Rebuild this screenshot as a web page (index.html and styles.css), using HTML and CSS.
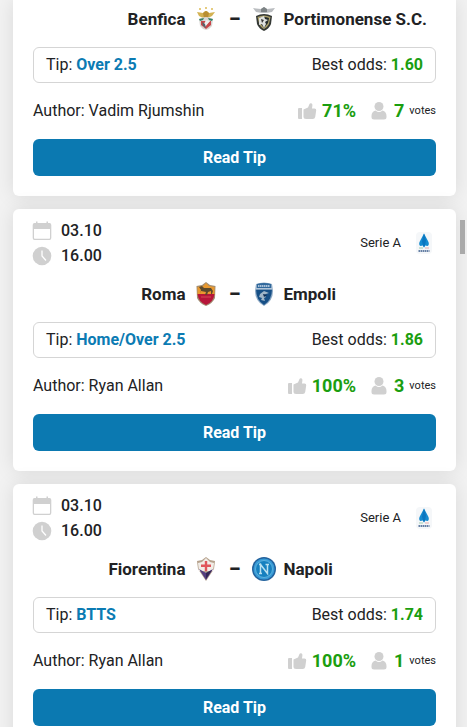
FILE: index.html
```html
<!DOCTYPE html>
<html lang="en">
<head>
<meta charset="utf-8">
<meta name="viewport" content="width=device-width, initial-scale=1">
<title>Football tips</title>
<link rel="stylesheet" href="styles.css">
</head>
<body>
<svg class="defs" aria-hidden="true">
  <symbol id="calendar" viewBox="0 0 20 20"><path fill="#d0d0d0" fill-rule="evenodd" d="M4 .5h1.500V2h9V.5H16V2h1.500Q19.300 2 19.300 4v13q0 2-1.800 2h-15Q.7 19 .7 17V4Q.7 2 2.500 2H4zM2 8v9q0 .7.700.7h14.600q.7 0 .7-.7V8z"/></symbol>
  <symbol id="clock" viewBox="0 0 20 20"><circle cx="10" cy="10" r="9.300" fill="#d0d0d0"/><path d="M10 4.500V10l4 4.500" fill="none" stroke="#fff" stroke-width="1.300"/></symbol>
  <symbol id="thumb" viewBox="0 0 20 20"><path fill="#d0d0d0" d="M2 7h3v11H2q-1 0-1-1V8q0-1 1-1zM6.500 8.500 11 6.500 12.500 3q.5-1 1.700-.7 1.500.5 1.200 2.200L15 7.500h2.500Q19.500 7.700 19.200 9.500l-1 6.500q-.4 2-2.400 2H9q-2.500 0-2.500-2z"/></symbol>
  <symbol id="person" viewBox="0 0 20 20"><circle cx="10" cy="5.500" r="4.500" fill="#d0d0d0"/><path fill="#d0d0d0" d="M6.500 9.500Q10 12.500 13.500 9.500 17.500 10.500 17.500 15v1q0 2.500-2.500 2.500H5Q2.500 18.500 2.500 16v-1Q2.500 10.500 6.500 9.500z"/></symbol>
  <symbol id="serie-a" viewBox="0 0 24 24"><rect x="4" y="1" width="16" height="22" rx="4" fill="#f5f7f9"/><path fill="#168bd0" d="M12 2.500 16.500 11q1 3-1 4L13 14.500l-1 2-1-2L8.500 15q-2-1-1-4z"/><path fill="#0b76c0" d="m12 2.500 2 7-1 5-1 2-1-2-1-4z"/><path stroke="#9fcdb2" d="M7 17h4"/><path stroke="#e8adad" d="M13 17h4"/><path stroke="#6680a5" stroke-width="2" stroke-dasharray="1.500 .5" d="M6.500 20h11"/></symbol>
  <symbol id="benfica" viewBox="0 0 24 24"><path fill="#e5cc80" d="M5 1h2v2H5zM11 0h2v2h-2zM17 1h2v2h-2z"/><path fill="#d3b253" d="M3 5l6 1 2-2h2l2 2 6-1-3 4-4 2H9L5 9z"/><path fill="#b88e32" d="m9 6 3-2 3 2-1 5h-4z"/><path fill="#d9d7d4" d="M5 12q7-4 14 0l-1 7q-2 3-6 4-4-1-6-4z"/><path fill="#348067" d="m5 12 5-1-1 2-3 1zM19 12l-5-1 1 2 3 1z"/><path fill="#c84649" d="M7 14h5v4l4-4h1v4l-5 4-5-4z"/><path fill="#eee" d="m12 13 4 1-5 6-2-1z"/><path fill="#53636a" d="m8 15 3 2 1 4-3-2z"/></symbol>
  <symbol id="portimonense" viewBox="0 0 24 24"><path fill="#b9bcbf" d="m1 1 8 1 3-2 3 2 8-1-3 4-6 1h-4L4 5z"/><path fill="#7c8284" d="m9 2 3-2 3 2v3H9z"/><path fill="#343835" d="M4 9q8-4 16 0l-1 8q-2 5-7 7-5-2-7-7z"/><path fill="#aba06b" d="M5.500 10Q12 7 18.500 10L17 17q-2 4-5 5-4-2-5-6z"/><path fill="#242b2b" d="M7 11q5-2 10 0l-1 5-4 5-4-5z"/><path fill="#dfe1de" d="m7 11 5-2 1 3 3 1-3 2 1 2-2 4-2-4-3 1z"/><path fill="#333" d="m9 12 3 1-2 3z"/></symbol>
  <symbol id="roma" viewBox="0 0 24 24"><path fill="#a18d72" d="m2.500 4 5.500-1 4-3 4 3 5.500 1-.5 12q-2 5-9 8-7-3-9-8z"/><path fill="#e9992f" d="m3.500 5 5.500-1 3-3 3 3 5.500 1v8h-17z"/><path fill="#b7163a" d="M3.500 12h17q-1 8-8.500 11-7.500-3-8.500-11z"/><path fill="#5b4a2d" d="m5 5 3-1 2 2h7l2 3-1 3h-1V9l-3 1-1 3h-2l1-3-5-1-1 3H6l1-4z"/><path stroke="#d54a55" d="M7 15h10"/></symbol>
  <symbol id="empoli" viewBox="0 0 24 24"><path fill="#8ca8c4" d="M4 2q8-3 16 0l1 7q0 10-9 15Q3 19 3 9z"/><path fill="#164f86" d="M4 7h16q0 11-8 16-8-5-8-16z"/><path fill="#31699c" d="M5 2q7-2 14 0v4H5z"/><path stroke="#a9c1d8" stroke-width="2" stroke-dasharray="1.500 .5" d="M6 4h12"/><path stroke="#d8e3ec" d="M4 7h16"/><path fill="#9fb5c8" d="m8 12 4-3 5 2-3 1-2 1 2 2-2 1 1 3-4-1 1-2-3-1z"/><path fill="#102c52" d="m11 12 4 1-3 2z"/></symbol>
  <symbol id="fiorentina" viewBox="0 0 24 24"><path fill="#b5a18c" d="m12 0 4 3 5 1-1 8-8 12-8-12-1-8 5-1z"/><path fill="#f1ece6" d="m12 1 4 4 4 1-1 8H5L4 6l4-1z"/><path fill="#543d80" d="m5 12 7 4 7-4-7 11z"/><path fill="#332753" d="m12 16 6-3-6 9z"/><path fill="#e0555a" d="M10.800 4h2.400v3.500H17v2.600h-3.800V14h-2.400v-3.900H7V7.500h3.800z"/></symbol>
  <symbol id="napoli" viewBox="0 0 24 24"><circle cx="12" cy="12" r="12" fill="#24639e"/><circle cx="12" cy="12" r="10.500" fill="#379bd7"/><circle cx="12" cy="12" r="8.500" fill="#1680bf" stroke="#5fb2de"/><path fill="none" stroke="#b9e0f0" stroke-width="1.500" d="M7 16.500h3m-1.500 0v-9l7 9v-9M7 7.500h2.500m4 0H17"/></symbol>
</svg>
<main class="tips">
  <article class="card card-continued">
    <div class="teams">
      <div class="team home">Benfica <svg class="crest"><use href="#benfica"/></svg></div>
      <span class="dash">–</span>
      <div class="team"><svg class="crest"><use href="#portimonense"/></svg> Portimonense S.C.</div>
    </div>
    <div class="tip"><span>Tip: <b class="pick">Over 2.5</b></span><span>Best odds: <b class="odds">1.60</b></span></div>
    <div class="info">
      <span class="author">Author: Vadim Rjumshin</span>
      <svg class="icon"><use href="#thumb"/></svg><b class="score">71%</b>
      <svg class="icon person"><use href="#person"/></svg><b class="score">7</b><span class="votes">votes</span>
    </div>
    <button class="read" type="button">Read Tip</button>
  </article>

  <article class="card">
    <header class="meta">
      <div>
        <div class="when"><svg class="icon"><use href="#calendar"/></svg>03.10</div>
        <div class="when"><svg class="icon"><use href="#clock"/></svg>16.00</div>
      </div>
      <div class="league">Serie A <svg class="crest"><use href="#serie-a"/></svg></div>
    </header>
    <div class="teams">
      <div class="team home">Roma <svg class="crest"><use href="#roma"/></svg></div>
      <span class="dash">–</span>
      <div class="team"><svg class="crest"><use href="#empoli"/></svg> Empoli</div>
    </div>
    <div class="tip"><span>Tip: <b class="pick">Home/Over 2.5</b></span><span>Best odds: <b class="odds">1.86</b></span></div>
    <div class="info">
      <span class="author">Author: Ryan Allan</span>
      <svg class="icon"><use href="#thumb"/></svg><b class="score">100%</b>
      <svg class="icon person"><use href="#person"/></svg><b class="score">3</b><span class="votes">votes</span>
    </div>
    <button class="read" type="button">Read Tip</button>
  </article>

  <article class="card">
    <header class="meta">
      <div>
        <div class="when"><svg class="icon"><use href="#calendar"/></svg>03.10</div>
        <div class="when"><svg class="icon"><use href="#clock"/></svg>16.00</div>
      </div>
      <div class="league">Serie A <svg class="crest"><use href="#serie-a"/></svg></div>
    </header>
    <div class="teams">
      <div class="team home">Fiorentina <svg class="crest"><use href="#fiorentina"/></svg></div>
      <span class="dash">–</span>
      <div class="team"><svg class="crest"><use href="#napoli"/></svg> Napoli</div>
    </div>
    <div class="tip"><span>Tip: <b class="pick">BTTS</b></span><span>Best odds: <b class="odds">1.74</b></span></div>
    <div class="info">
      <span class="author">Author: Ryan Allan</span>
      <svg class="icon"><use href="#thumb"/></svg><b class="score">100%</b>
      <svg class="icon person"><use href="#person"/></svg><b class="score">1</b><span class="votes">votes</span>
    </div>
    <button class="read" type="button">Read Tip</button>
  </article>
</main>
<div class="scroll-thumb" aria-hidden="true"></div>
</body>
</html>
```

FILE: styles.css
```css
* {
  box-sizing: border-box;
}

html {
  scrollbar-width: none;
}

body {
  margin: 0;
  background: #f2f2f2;
  color: #212224;
  font: 16px/24px Roboto, "Liberation Sans", sans-serif;
}

.defs {
  display: none;
}

.tips {
  display: grid;
  gap: 13px;
  padding: 0 11px 13px 13px;
}

.card {
  min-width: 0;
  padding: 9px 20px 20px;
  border-radius: 6px;
  background: #fff;
  box-shadow: 0 0 20px rgba(0, 0, 0, 0.1);
}

.card-continued {
  padding-top: 7px;
  border-radius: 0 0 6px 6px;
}

.meta {
  display: flex;
  align-items: center;
  justify-content: space-between;
  margin-bottom: 14px;
}

.when {
  display: flex;
  align-items: center;
  gap: 9px;
  line-height: 25px;
  font-weight: 500;
}

.icon {
  flex: none;
  width: 20px;
  height: 20px;
}

.when .icon {
  margin-left: -1px;
}

.league {
  display: flex;
  align-items: center;
  gap: 11px;
  font-size: 13px;
}

.crest {
  flex: none;
  width: 24px;
  height: 24px;
}

.teams {
  display: grid;
  grid-template-columns: 1fr 34px 1fr;
  align-items: center;
  margin-bottom: 16px;
  font-size: 17px;
  font-weight: 700;
}

.team {
  display: flex;
  align-items: center;
  gap: 8px;
  white-space: nowrap;
}

.home {
  justify-content: flex-end;
}

.dash {
  text-align: center;
  font-size: 18px;
  font-weight: 900;
}

.tip {
  display: flex;
  align-items: center;
  justify-content: space-between;
  height: 36px;
  padding: 0 12px;
  border: 1px solid #d5d5d5;
  border-radius: 6px;
}

.pick {
  color: #0b7bb3;
}

.odds,
.score {
  color: #1b9e10;
}

.info {
  display: flex;
  align-items: center;
  margin: 16px 0;
}

.author {
  margin-right: auto;
}

.score {
  margin-left: 5px;
  font-size: 18px;
}

.person {
  margin-left: 13px;
}

.votes {
  margin-left: 5px;
  font-size: 11px;
}

.read {
  display: block;
  width: 100%;
  height: 37px;
  padding: 0;
  border: 0;
  border-radius: 6px;
  background: #0b79b1;
  color: #fff;
  font: 700 16px/24px Roboto, "Liberation Sans", sans-serif;
}

.scroll-thumb {
  position: fixed;
  top: 220px;
  right: 2px;
  width: 5px;
  height: 34px;
  background: #aaa;
}
```
